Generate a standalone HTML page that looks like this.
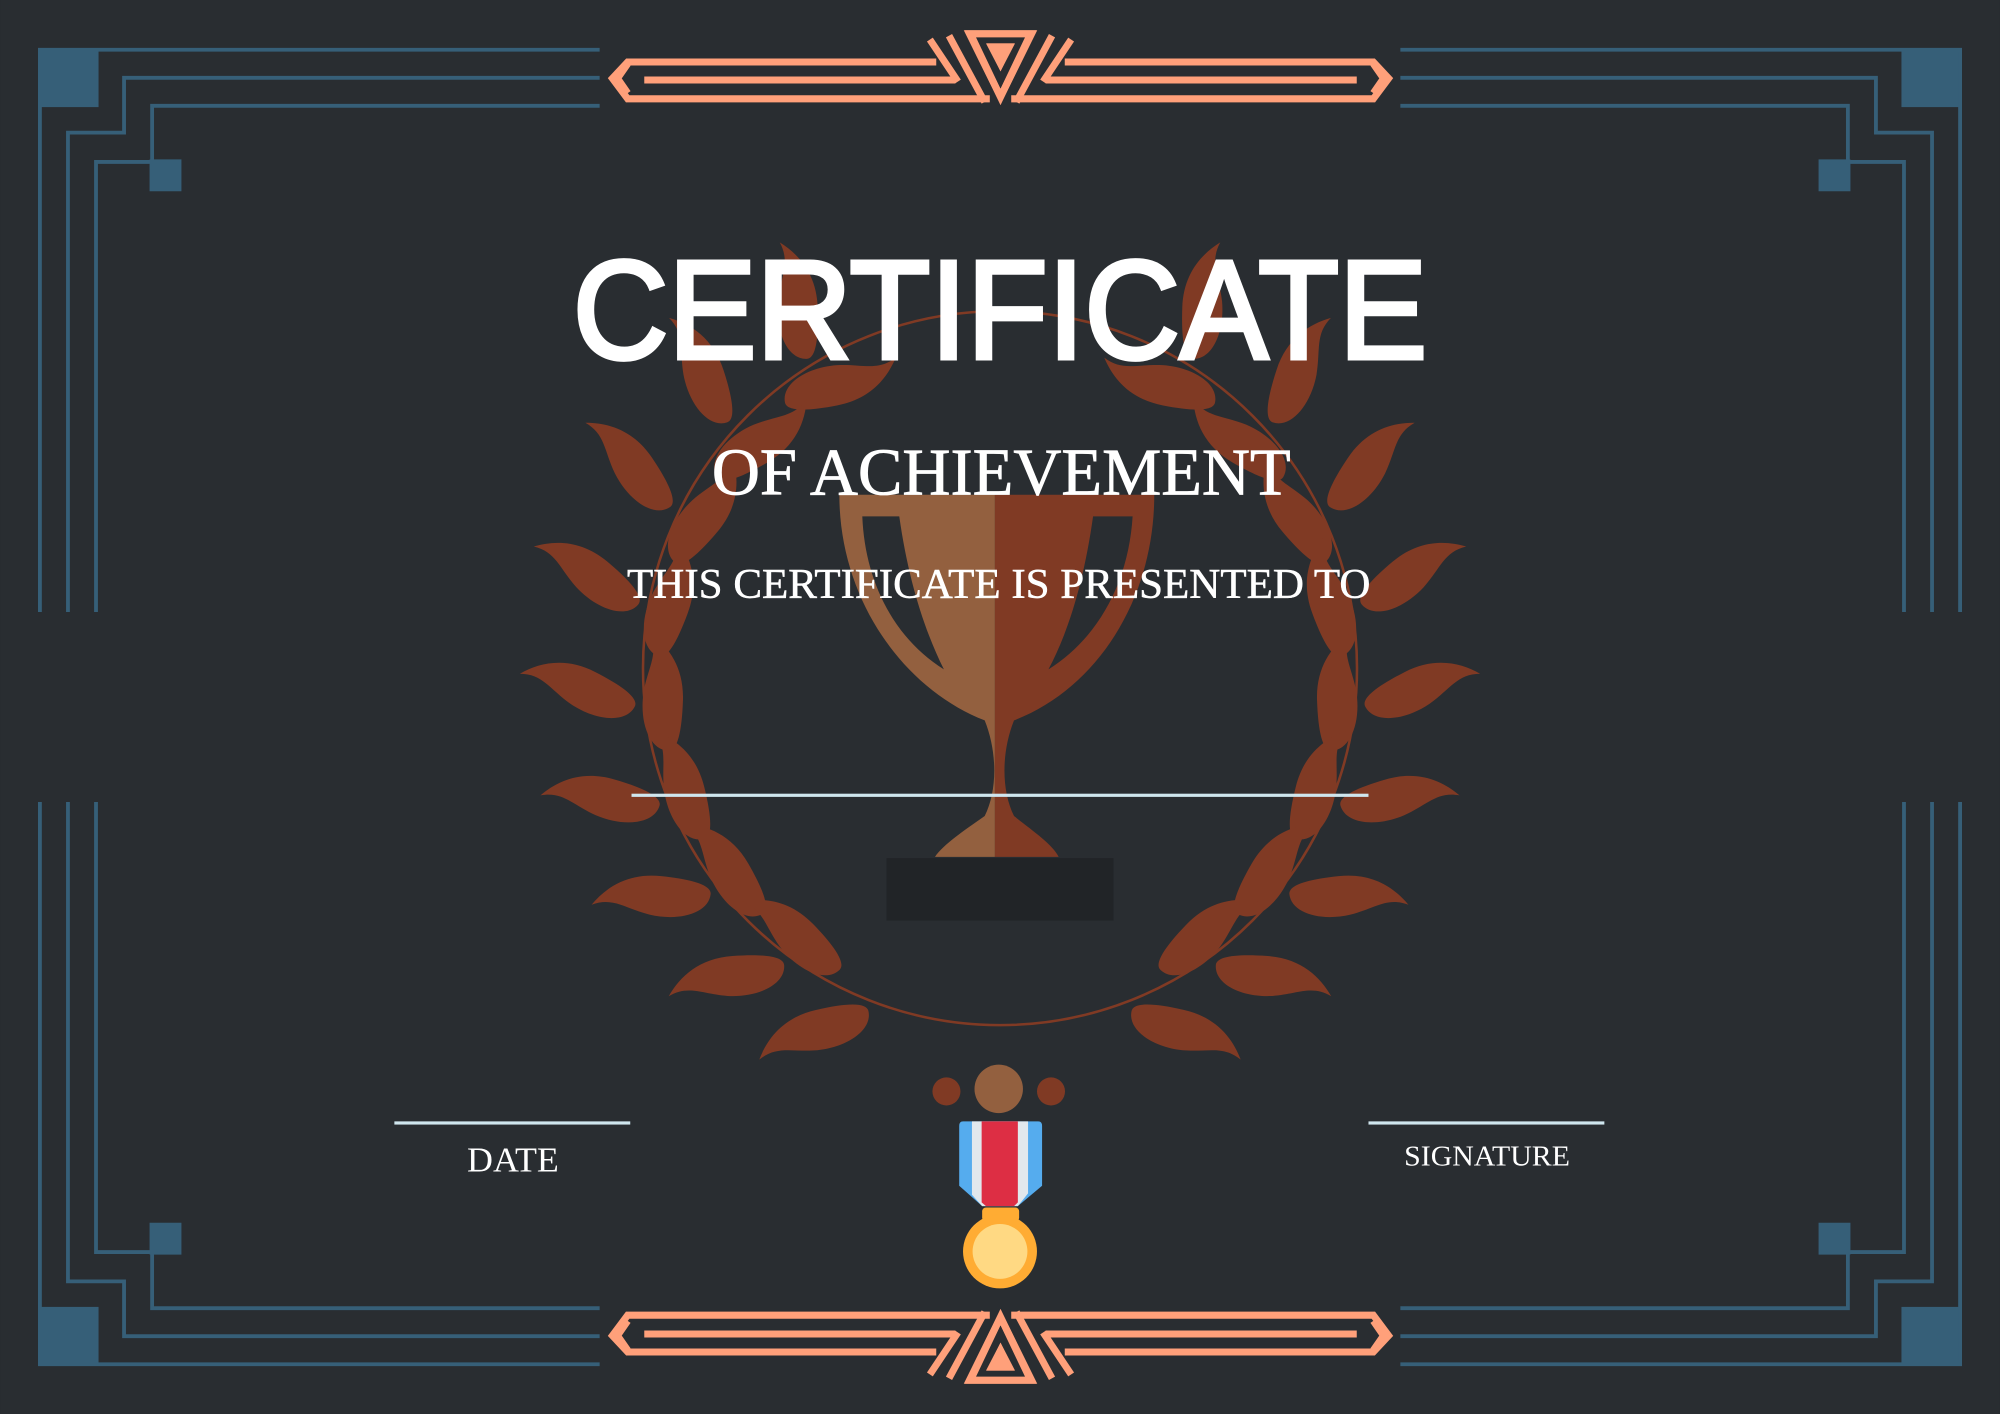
<!DOCTYPE html>
<html><head><meta charset="utf-8"><style>
html,body{margin:0;padding:0;background:#292D31;}
svg{display:block;}
</style></head><body>
<svg width="2000" height="1414" viewBox="0 0 1568 1109" xmlns="http://www.w3.org/2000/svg">
<defs>
<g id="corner" fill="none" stroke="#365F78" stroke-width="3">
  <rect x="30" y="38" width="47" height="46" fill="#365F78" stroke="none"/>
  <path d="M31 480 V39 H470"/>
  <path d="M53 480 V104 H97 V61 H470"/>
  <path d="M75 480 V127 H119 V83 H470"/>
  <rect x="117" y="125" width="25" height="25" fill="#365F78" stroke="none"/>
</g>
<g id="orn">
  <g fill="none" stroke="#FFA07A" stroke-width="5.5" stroke-linejoin="miter">
    <path d="M734 48.6 H492 L480 61.5 L492 77.5 H776"/>
    <path d="M749 62.7 H505"/>
    <path d="M492 50 L484 61.5 L492 73"/>
    <path d="M729 31 L751 64"/>
    <path d="M744 28 L772 80"/>
    <path d="M760 26.5 H808 L784.4 76 Z"/>
  </g>
  <path d="M773 34 H795 L784.4 56 Z" fill="#FFA07A"/>
</g>
<path id="leaf" d="M0 0 C0 -15 22 -24 46 -21 C66 -18 76 -10 92 -18 C82 -3 66 10 40 10 C15 10 0 7 0 0Z" fill="#803A24"/>
<g id="half">
  <use href="#leaf" transform="translate(784 524) rotate(238) translate(286 0) rotate(30)"/>
  <use href="#leaf" transform="translate(784 524) rotate(222) translate(288 0) rotate(30)"/>
  <use href="#leaf" transform="translate(784 524) rotate(206) translate(288 0) rotate(30)"/>
  <use href="#leaf" transform="translate(784 524) rotate(190) translate(288 0) rotate(30)"/>
  <use href="#leaf" transform="translate(784 524) rotate(174) translate(288 0) rotate(33)"/>
  <use href="#leaf" transform="translate(784 524) rotate(158) translate(288 0) rotate(38)"/>
  <use href="#leaf" transform="translate(784 524) rotate(142) translate(288 0) rotate(44)"/>
  <use href="#leaf" transform="translate(784 524) rotate(126) translate(288 0) rotate(50)"/>
  <use href="#leaf" transform="translate(784 524) rotate(111) translate(288 0) rotate(56)"/>
  <use href="#leaf" transform="translate(784 524) rotate(231) translate(268 0) rotate(118)"/>
  <use href="#leaf" transform="translate(784 524) rotate(214) translate(268 0) rotate(116)"/>
  <use href="#leaf" transform="translate(784 524) rotate(198) translate(268 0) rotate(112)"/>
  <use href="#leaf" transform="translate(784 524) rotate(182) translate(268 0) rotate(108)"/>
  <use href="#leaf" transform="translate(784 524) rotate(166) translate(268 0) rotate(106)"/>
  <use href="#leaf" transform="translate(784 524) rotate(150) translate(268 0) rotate(106)"/>
  <use href="#leaf" transform="translate(784 524) rotate(134) translate(268 0) rotate(106)"/>
  <use href="#leaf" transform="translate(784 524) rotate(118) translate(268 0) rotate(108)"/>
</g>
<clipPath id="lh"><rect x="0" y="0" width="780" height="1109"/></clipPath>
<clipPath id="rh"><rect x="780" y="0" width="800" height="1109"/></clipPath>
<path id="cup" d="M658 388 L905 388 C905 470 860 540 795 565 C785 590 785 620 795 640 C810 652 825 662 830 672 L733 672 C740 662 755 652 772 640 C782 620 782 590 772 565 C708 540 658 470 658 388Z"/>
</defs>
<rect width="1568" height="1109" fill="#292D31"/>

<use href="#corner"/>
<use href="#corner" transform="translate(1568 0) scale(-1 1)"/>
<use href="#corner" transform="translate(0 1109) scale(1 -1)"/>
<use href="#corner" transform="translate(1568 1109) scale(-1 -1)"/>

<use href="#orn"/>
<use href="#orn" transform="translate(1568.8 0) scale(-1 1)"/>
<use href="#orn" transform="translate(0 1109) scale(1 -1)"/>
<use href="#orn" transform="translate(1568.8 1109) scale(-1 -1)"/>

<circle cx="784" cy="524" r="280" fill="none" stroke="#803A24" stroke-width="2"/>
<use href="#half"/>
<use href="#half" transform="translate(1568 0) scale(-1 1)"/>

<use href="#cup" fill="#93603F" clip-path="url(#lh)"/>
<use href="#cup" fill="#803A24" clip-path="url(#rh)"/>
<path d="M676 405 L705 405 C712 455 725 495 740 525 C700 500 678 455 676 405Z" fill="#292D31"/>
<path d="M888 405 L857 405 C850 455 838 495 822 525 C862 500 885 455 888 405Z" fill="#292D31"/>
<rect x="695" y="673" width="178" height="49" fill="#212427"/>

<circle cx="742" cy="856" r="11" fill="#803A24"/>
<circle cx="783" cy="854" r="19" fill="#93603F"/>
<circle cx="824" cy="856" r="11" fill="#803A24"/>
<path d="M755 879.5 H814 Q817 879.5 817 883 V930 L798 946 H770 L752 930 V883 Q752 879.5 755 879.5Z" fill="#55ACEE"/>
<path d="M762 879.5 H806 V936 L798 946 H770 L762 937Z" fill="#E1E8ED"/>
<path d="M769.6 879.5 H798 V943 L795 946 H773 L769.6 943Z" fill="#DD2E44"/>
<rect x="770" y="947" width="29" height="11" rx="3" fill="#FFAC33"/>
<circle cx="784" cy="981.5" r="29" fill="#FFAC33"/>
<circle cx="784" cy="981.5" r="21.5" fill="#FFD983"/>

<text x="784" y="281" text-anchor="middle" font-family="Liberation Sans, sans-serif" font-size="110" fill="#fff" stroke="#fff" stroke-width="3.5" textLength="670" lengthAdjust="spacingAndGlyphs">CERTIFICATE</text>
<text x="785" y="388" text-anchor="middle" font-family="Liberation Serif, serif" font-size="52" fill="#fff" stroke="#fff" stroke-width="0.6" textLength="454" lengthAdjust="spacingAndGlyphs">OF ACHIEVEMENT</text>
<text x="783" y="469" text-anchor="middle" font-family="Liberation Serif, serif" font-size="33" fill="#fff" stroke="#fff" stroke-width="0.4" textLength="583" lengthAdjust="spacingAndGlyphs">THIS CERTIFICATE IS PRESENTED TO</text>
<rect x="495" y="622.5" width="578" height="2.5" fill="#CFE6EE"/>
<rect x="309" y="879.5" width="185" height="2.5" fill="#CFE6EE"/>
<rect x="1073" y="879.5" width="185" height="2.5" fill="#CFE6EE"/>
<text x="402" y="919" text-anchor="middle" font-family="Liberation Serif, serif" font-size="27" fill="#fff" textLength="72" lengthAdjust="spacingAndGlyphs">DATE</text>
<text x="1166" y="914" text-anchor="middle" font-family="Liberation Serif, serif" font-size="22" fill="#fff" textLength="130" lengthAdjust="spacingAndGlyphs">SIGNATURE</text>
</svg>
</body></html>
